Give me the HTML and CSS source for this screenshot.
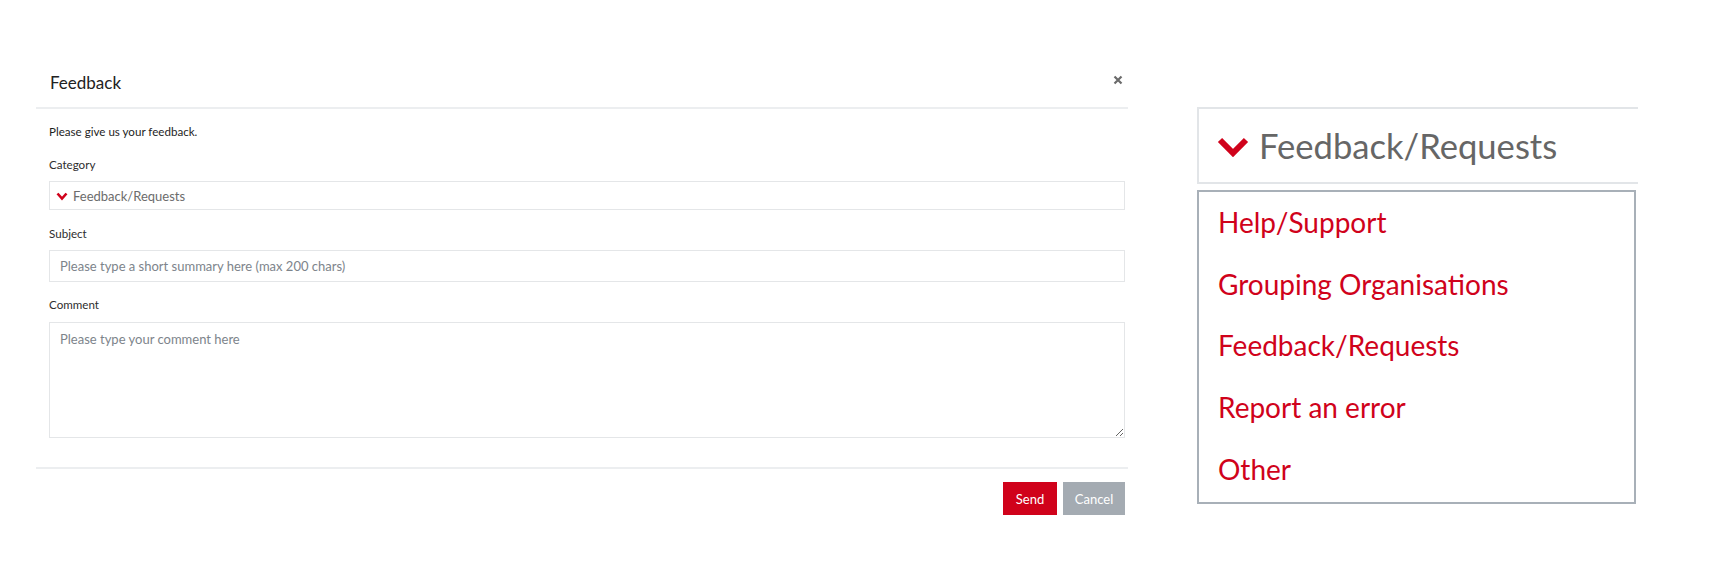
FILE: index.html
```
<!DOCTYPE html>
<html>
<head>
  <title>Feedback</title>
  <meta charset="UTF-8">
  <meta name="viewport" content="width=device-width, initial-scale=1">
  <link rel="stylesheet" href="styles.css">
</head>
<body>
  <div class="page">
    <div class="modal">
      <div class="modal-header">
        <h2 class="modal-title">Feedback</h2>
        <button class="close" type="button" aria-label="Close">
          <svg width="10" height="10" viewBox="0 0 10 10"><path d="M1.5 1.5 L8.5 8.5 M8.5 1.5 L1.5 8.5" stroke="#6b6b6b" stroke-width="2.2" fill="none"/></svg>
        </button>
      </div>
      <form class="modal-body">
        <p class="intro">Please give us your feedback.</p>

        <label class="field-label">Category</label>
        <div class="select">
          <svg class="chevron" width="12" height="9" viewBox="0 0 12 9"><polyline points="1.5,1.5 6,6.5 10.5,1.5" stroke="#d0021b" stroke-width="2.6" fill="none"/></svg>
          <span>Feedback/Requests</span>
        </div>

        <label class="field-label">Subject</label>
        <input class="input" type="text" placeholder="Please type a short summary here (max 200 chars)">

        <label class="field-label comment-label">Comment</label>
        <textarea class="textarea" placeholder="Please type your comment here"></textarea>
      </form>
      <div class="modal-footer">
        <button class="btn btn-send" type="button">Send</button>
        <button class="btn btn-cancel" type="button">Cancel</button>
      </div>
    </div>

    <!-- enlarged view of the category dropdown -->
    <div class="zoomed">
      <div class="big-select">
        <svg class="big-chevron" width="32" height="20" viewBox="0 0 32 20"><polyline points="3,3 16,16 29,3" stroke="#d0021b" stroke-width="6" fill="none"/></svg>
        <span>Feedback/Requests</span>
      </div>
      <ul class="options">
        <li>Help/Support</li>
        <li>Grouping Organisations</li>
        <li>Feedback/Requests</li>
        <li>Report an error</li>
        <li>Other</li>
      </ul>
    </div>
  </div>
</body>
</html>
```

FILE: styles.css
```
body {
  font-family: Lato, 'Open Sans', sans-serif;
  background: #fff;
  margin: 0;
  padding: 0;
  color: #222;
}
.page {
  display: flex;
  align-items: flex-start;
  padding-left: 36px;
}
.modal {
  width: 1092px;
  margin-top: 58px;
}
.modal-header {
  display: flex;
  align-items: center;
  justify-content: space-between;
  height: 49px;
  padding: 0 4px 0 14px;
  border-bottom: 2px solid #eceef0;
}
.modal-title {
  margin: 0;
  font-size: 17px;
  font-weight: 400;
  color: #222;
}
.close {
  border: none;
  background: none;
  padding: 0;
  width: 12px;
  height: 12px;
  margin-top: -6px;
  display: flex;
  align-items: center;
  justify-content: center;
}
.modal-body {
  display: flex;
  flex-direction: column;
  padding: 0 3px 29px 13px;
}
.intro {
  margin: 15px 0 0 0;
  font-size: 11.6px;
  line-height: 16px;
  color: #1e1e1e;
}
.field-label {
  display: block;
  margin-top: 17px;
  font-size: 11.6px;
  line-height: 16px;
  color: #2e2e2e;
}
.select {
  display: flex;
  align-items: center;
  gap: 5px;
  height: 29px;
  box-sizing: border-box;
  margin-top: 8px;
  padding-left: 6px;
  border: 1px solid #e4e6e8;
  font-size: 13px;
  color: #6c6c6c;
}
.chevron {
  margin-top: 1px;
}
.select + .field-label {
  margin-top: 16px;
}
.input {
  height: 32px;
  box-sizing: border-box;
  margin-top: 8px;
  padding: 0 10px;
  border: 1px solid #e4e6e8;
  font-family: inherit;
  font-size: 13px;
  outline: none;
}
.comment-label {
  margin-top: 15px;
}
.textarea {
  height: 116px;
  box-sizing: border-box;
  margin-top: 9px;
  padding: 8px 10px;
  border: 1px solid #e4e6e8;
  font-family: inherit;
  font-size: 13px;
  resize: vertical;
  outline: none;
}
.input::placeholder,
.textarea::placeholder {
  color: #7d848b;
}
.modal-footer {
  display: flex;
  justify-content: flex-end;
  gap: 6px;
  padding: 13px 3px 0 0;
  border-top: 2px solid #eceef0;
}
.btn {
  height: 33px;
  border: none;
  font-family: inherit;
  font-size: 13px;
  color: #fff;
  cursor: pointer;
}
.btn-send {
  width: 54px;
  background: #d0021b;
}
.btn-cancel {
  width: 62px;
  background: #a4abb2;
}
.zoomed {
  margin-left: 69px;
  margin-top: 107px;
  width: 441px;
}
.big-select {
  display: flex;
  align-items: center;
  height: 77px;
  box-sizing: border-box;
  padding-left: 18px;
  gap: 10px;
  border-top: 2px solid #e2e5e8;
  border-bottom: 2px solid #e2e5e8;
  border-left: 2px solid #e2e5e8;
  font-size: 34.6px;
  color: #666;
}
.big-chevron {
  margin-top: 2px;
}
.options {
  list-style: none;
  margin: 6px 2px 0 0;
  padding: 0 0 1px 19px;
  border: 2px solid #a8b0b8;
}
.options li {
  font-size: 28px;
  line-height: 61.7px;
  color: #d0021b;
}
```
